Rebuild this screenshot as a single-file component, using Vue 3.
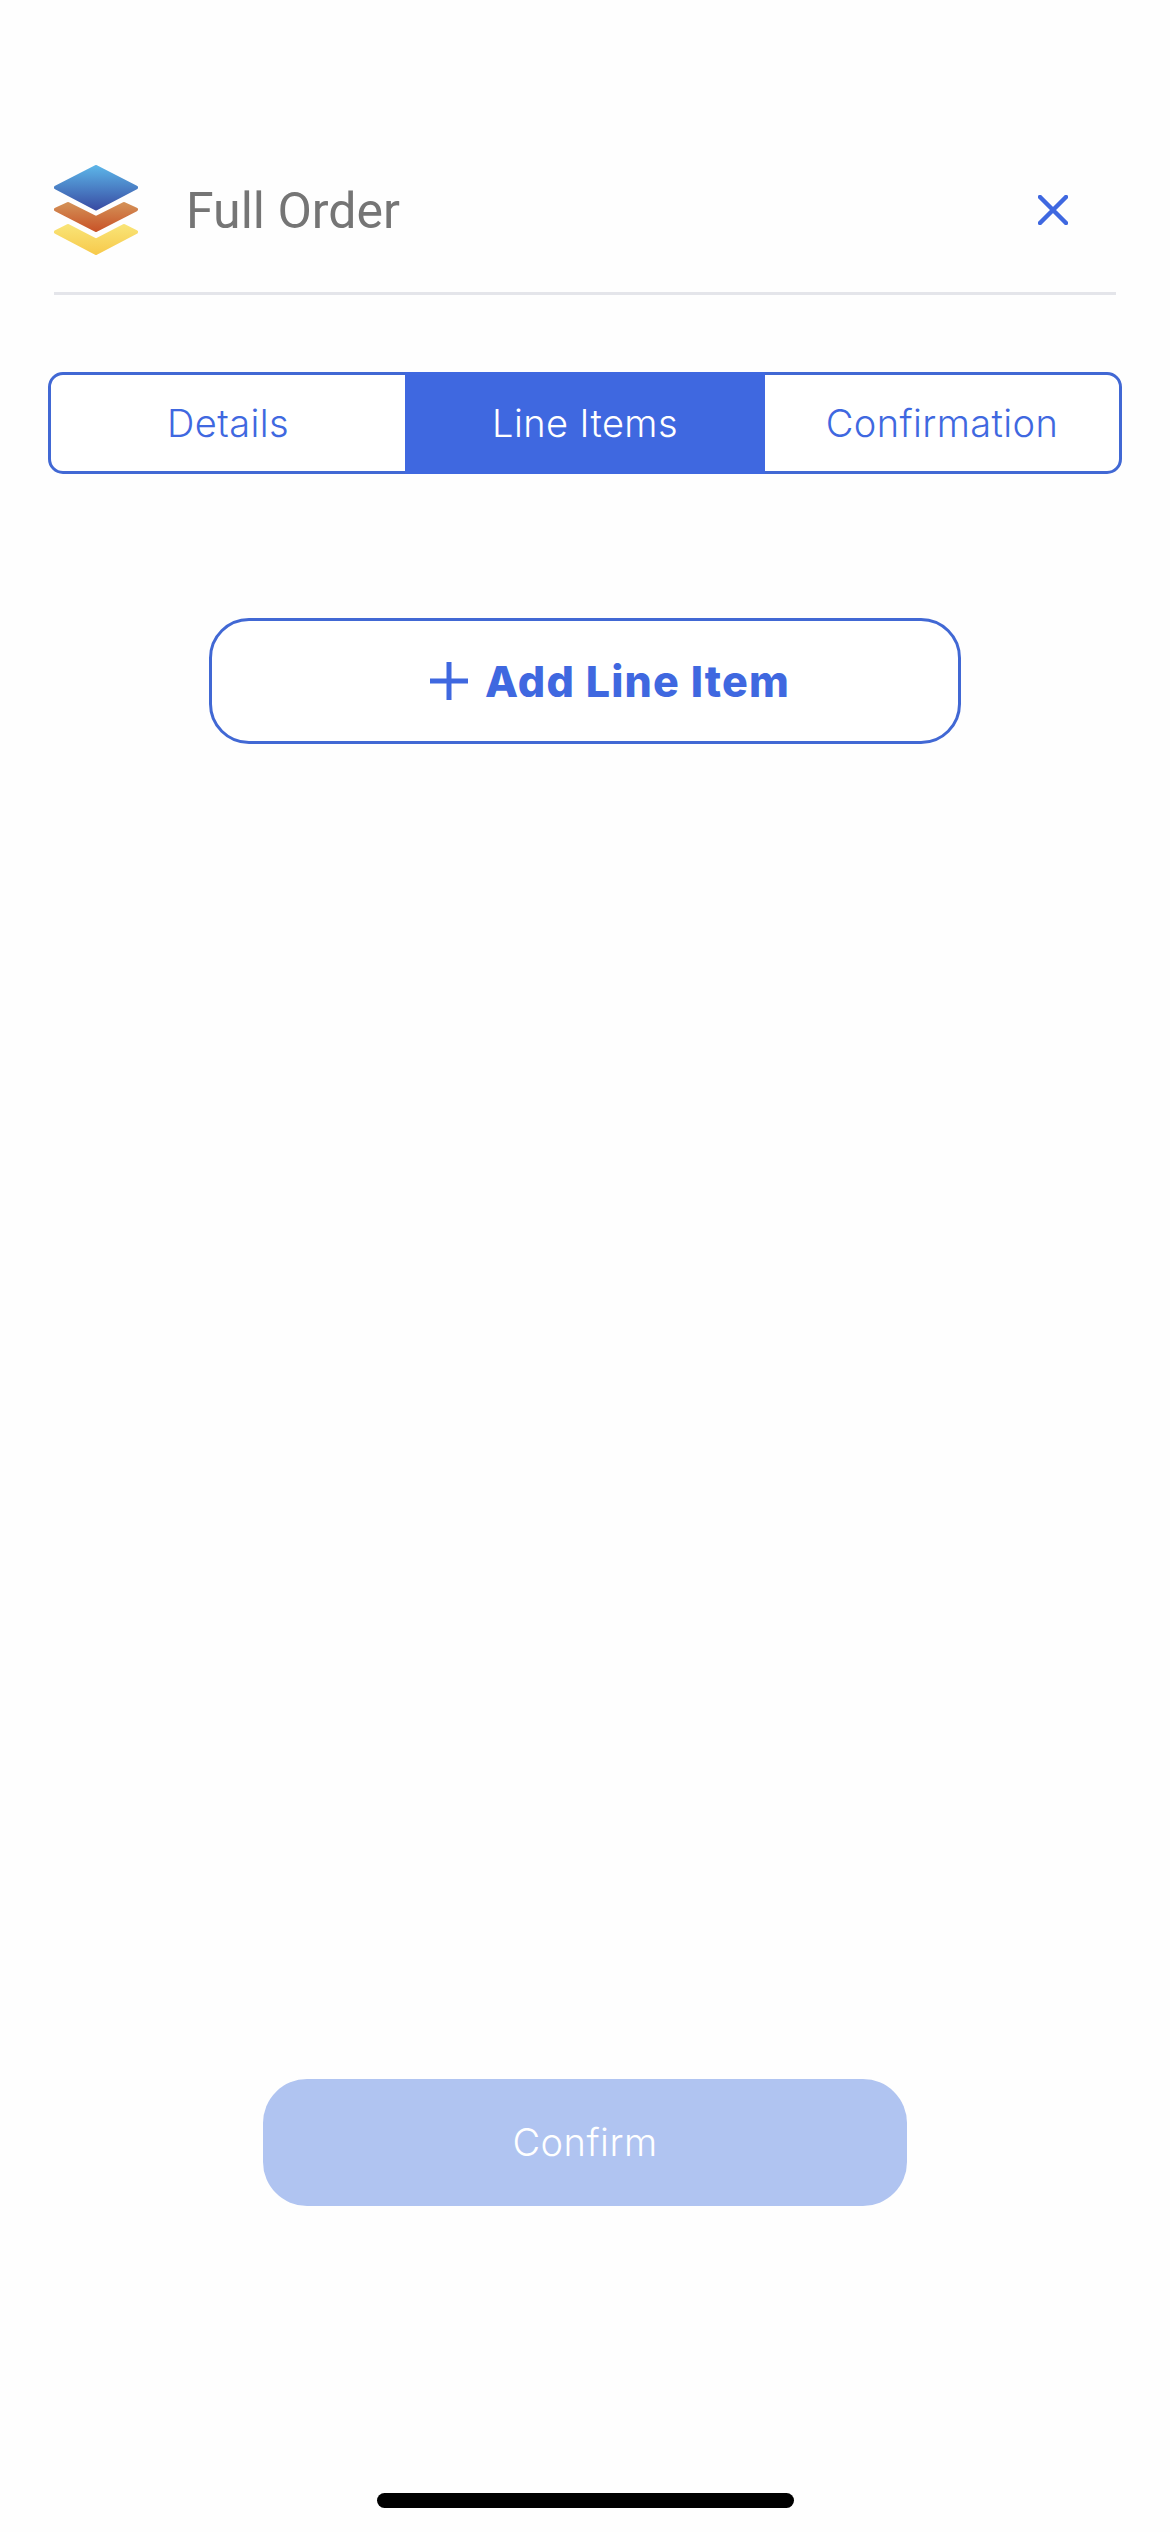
<script setup>
const tabs = [
  { label: 'Details', active: false },
  { label: 'Line Items', active: true },
  { label: 'Confirmation', active: false },
];
</script>

<template>
  <div class="page">
    <header class="header">
      <svg class="logo" width="84" height="90" viewBox="0 0 84 90" aria-hidden="true">
        <defs>
          <linearGradient id="logoBlue" x1="0" y1="0" x2="0" y2="1">
            <stop offset="0" stop-color="#5bb2e6" />
            <stop offset="1" stop-color="#3a4fa5" />
          </linearGradient>
          <linearGradient id="logoOrange" x1="0" y1="0" x2="0" y2="1">
            <stop offset="0" stop-color="#d38e55" />
            <stop offset="1" stop-color="#c9562a" />
          </linearGradient>
          <linearGradient id="logoYellow" x1="0" y1="0" x2="0" y2="1">
            <stop offset="0" stop-color="#f9e375" />
            <stop offset="1" stop-color="#f7cb4e" />
          </linearGradient>
        </defs>
        <path d="M42 2 L82 22.5 L42 43.5 L2 22.5 Z" fill="url(#logoBlue)" stroke="url(#logoBlue)" stroke-width="4" stroke-linejoin="round" />
        <path d="M14 39 L42 53 L70 39 L82 44.5 L42 65 L2 44.5 Z" fill="url(#logoOrange)" stroke="url(#logoOrange)" stroke-width="4" stroke-linejoin="round" />
        <path d="M14 61 L42 75.5 L70 61 L82 67 L42 88 L2 67 Z" fill="url(#logoYellow)" stroke="url(#logoYellow)" stroke-width="4" stroke-linejoin="round" />
      </svg>
      <h1 class="title">Full Order</h1>
      <button class="close" aria-label="Close">
        <svg width="30" height="30" viewBox="0 0 30 30" aria-hidden="true">
          <path d="M2 2 L28 28 M28 2 L2 28" stroke="#3f68e0" stroke-width="4.5" stroke-linecap="round" fill="none" />
        </svg>
      </button>
    </header>

    <nav class="tabs">
      <div v-for="tab in tabs" :key="tab.label" class="tab" :class="{ active: tab.active }">{{ tab.label }}</div>
    </nav>

    <button class="add">
      <svg width="38" height="38" viewBox="0 0 38 38" aria-hidden="true">
        <path d="M19 0 V38 M0 19 H38" stroke="#3f68e0" stroke-width="5" fill="none" />
      </svg>
      <span>Add Line Item</span>
    </button>

    <button class="confirm">Confirm</button>
    <div class="home-bar"></div>
  </div>
</template>

<style scoped>
.page {
  display: flex;
  flex-direction: column;
  height: 2532px;
  box-sizing: border-box;
  padding-bottom: 24px;
  background: #fefefe;
  font-family: Inter, "Noto Sans", sans-serif;
}
.header {
  display: flex;
  align-items: center;
  margin: 0 54px;
  padding: 165px 48px 37px 0;
  border-bottom: 3px solid #e4e5ea;
}
.logo {
  flex: none;
}
.title {
  margin: 2px 0 0 48px;
  font-family: Roboto, sans-serif;
  font-size: 50px;
  font-weight: 400;
  color: #757575;
}
.close {
  display: flex;
  margin-left: auto;
  padding: 0;
  border: none;
  background: none;
}
.tabs {
  display: grid;
  grid-template-columns: 1fr 360px 1fr;
  height: 102px;
  margin: 77px 48px 0;
  box-sizing: border-box;
  border: 3px solid #4168d4;
  border-radius: 15px;
  background: #fff;
}
.tab {
  display: flex;
  align-items: center;
  justify-content: center;
  font-size: 38px;
  font-weight: 350;
  letter-spacing: 0.4px;
  color: #3f68e0;
}
.tab.active {
  margin: -3px 0;
  background: #3f68e0;
  color: #fff;
}
.add {
  display: flex;
  align-items: center;
  justify-content: center;
  gap: 17px;
  align-self: flex-start;
  width: 752px;
  height: 126px;
  margin: 144px 0 0 209px;
  padding: 0 0 0 50px;
  border: 3px solid #4168d4;
  border-radius: 40px;
  background: #fff;
  font-family: inherit;
  font-size: 43px;
  font-weight: 800;
  letter-spacing: 1.2px;
  color: #3f68e0;
}
.confirm {
  align-self: flex-start;
  width: 644px;
  height: 127px;
  margin: auto 0 0 263px;
  padding: 0 0 2px;
  border: none;
  border-radius: 44px;
  background: #b0c4f1;
  font-family: inherit;
  font-size: 38px;
  font-weight: 300;
  letter-spacing: 0.5px;
  color: #fff;
}
.home-bar {
  align-self: center;
  flex: none;
  width: 417px;
  height: 15px;
  margin-top: 287px;
  border-radius: 8px;
  background: #000;
}
</style>

<style>
body {
  background: #fefefe;
}
</style>
